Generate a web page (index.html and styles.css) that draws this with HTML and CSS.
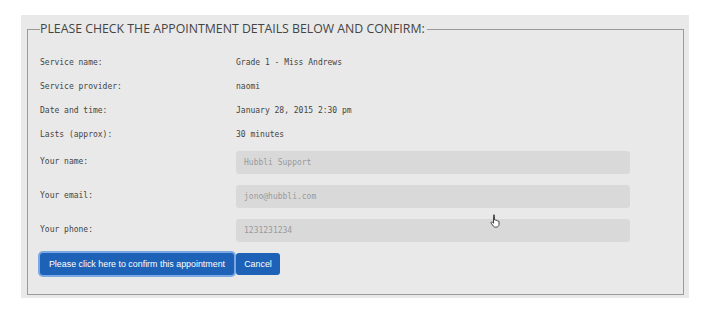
FILE: index.html
```html
<!DOCTYPE html>
<html lang="en">
<head>
    <meta charset="UTF-8">
    <meta name="viewport" content="width=device-width, initial-scale=1.0">
    <title>Confirm Appointment</title>
    <link rel="stylesheet" href="styles.css">
</head>
<body>
    <div class="panel">
        <fieldset class="confirmBox">
            <legend>PLEASE CHECK THE APPOINTMENT DETAILS BELOW AND CONFIRM:</legend>
            <div class="row">
                <span class="label">Service name:</span>
                <span class="value">Grade 1 - Miss Andrews</span>
            </div>
            <div class="row">
                <span class="label">Service provider:</span>
                <span class="value">naomi</span>
            </div>
            <div class="row">
                <span class="label">Date and time:</span>
                <span class="value">January 28, 2015 2:30 pm</span>
            </div>
            <div class="row">
                <span class="label">Lasts (approx):</span>
                <span class="value">30 minutes</span>
            </div>
            <div class="row field">
                <label class="label" for="idName">Your name:</label>
                <input id="idName" type="text" placeholder="Hubbli Support">
            </div>
            <div class="row field">
                <label class="label" for="idEmail">Your email:</label>
                <input id="idEmail" type="text" placeholder="jono@hubbli.com">
            </div>
            <div class="row field">
                <label class="label" for="idPhone">Your phone:</label>
                <input id="idPhone" type="text" placeholder="1231231234">
            </div>
            <div class="buttons">
                <button class="btn btnConfirm">Please click here to confirm this appointment</button>
                <button class="btn btnCancel">Cancel</button>
            </div>
        </fieldset>
        <!-- mouse cursor from the screenshot -->
        <svg class="cursor" width="12" height="14" viewBox="0 0 12 14">
            <path d="M3.5 1.2c.6 0 1 .4 1 1V6l.6-.2c.5 0 .9.3.9.7l.5-.2c.5 0 .9.3 1 .7l.5-.1c.6 0 1 .4 1 1v2.4c0 1.6-1.2 2.9-2.8 2.9H5.4c-.9 0-1.6-.4-2.1-1.1L1.2 9.2c-.3-.5-.2-1 .3-1.2.4-.2.9 0 1.2.3l.8 1V2.2c0-.6.4-1 1-1z" fill="#fff" stroke="#333" stroke-width=".9"/>
        </svg>
    </div>
</body>
</html>
```

FILE: styles.css
```css
*{
    box-sizing: border-box;
}
body{
    margin: 0;
    background-color: #fff;
}
.panel{
    position: relative;
    width: 668px;
    height: 283px;
    margin: 15px 0 0 21px;
    padding: 4px 5px 3px 6px;
    background-color: #e9e9e9;
}
.confirmBox{
    margin: 0;
    height: 276px;
    padding: 11px 12px 0 12px;
    border: 1px solid #9a9a9a;
}
.confirmBox legend{
    padding: 0 2px 0 0;
    font-family: "Open Sans", sans-serif;
    font-size: 12.3px;
    line-height: 20px;
    color: #444;
}
.row{
    display: flex;
    height: 24px;
    line-height: 26px;
    font-family: "DejaVu Sans Mono", monospace;
    font-size: 8px;
    color: #444;
}
.label{
    width: 196px;
    flex-shrink: 0;
}
.row.field{
    height: 34px;
    line-height: 24px;
    padding-top: 2px;
}
.row.field .label{
    padding-top: 2px;
}
.row.field input{
    width: 394px;
    height: 23px;
    margin-top: 3px;
    padding: 0 8px;
    border: none;
    border-radius: 3px;
    background-color: #d9d9d9;
    font-family: "DejaVu Sans Mono", monospace;
    font-size: 8px;
    color: #444;
}
.row.field input::placeholder{
    color: #9a9a9a;
}
.buttons{
    display: flex;
    margin-top: 5px;
}
.btn{
    height: 22px;
    padding: 0 10px;
    border: none;
    border-radius: 3px;
    background-color: #1d62b6;
    color: #fff;
    font-family: "Liberation Sans", Arial, sans-serif;
    font-size: 8.9px;
    cursor: pointer;
}
.btnConfirm{
    width: 194px;
    padding: 0;
    box-shadow: 0 0 0 2px #79a8e4;
}
.btnCancel{
    width: 44px;
    margin-left: 2px;
    padding: 0;
}
.cursor{
    position: absolute;
    left: 469px;
    top: 199px;
}
```
